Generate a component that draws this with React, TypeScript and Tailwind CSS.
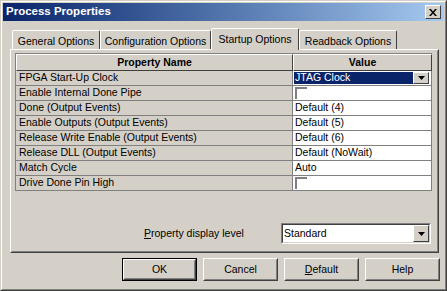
import React from 'react';

const rows: { name: string; value: string; kind: 'select' | 'check' | 'text' }[] = [
  { name: 'FPGA Start-Up Clock', value: 'JTAG Clock', kind: 'select' },
  { name: 'Enable Internal Done Pipe', value: '', kind: 'check' },
  { name: 'Done (Output Events)', value: 'Default (4)', kind: 'text' },
  { name: 'Enable Outputs (Output Events)', value: 'Default (5)', kind: 'text' },
  { name: 'Release Write Enable (Output Events)', value: 'Default (6)', kind: 'text' },
  { name: 'Release DLL (Output Events)', value: 'Default (NoWait)', kind: 'text' },
  { name: 'Match Cycle', value: 'Auto', kind: 'text' },
  { name: 'Drive Done Pin High', value: '', kind: 'check' },
];

const tabs = [
  { label: 'General Options', w: 'w-[88px]' },
  { label: 'Configuration Options', w: 'w-[111px]' },
  { label: 'Startup Options', w: 'w-[88px]', active: true },
  { label: 'Readback Options', w: 'w-[98px]' },
];

// small black down triangle used on combo buttons
const ArrowBtn = () => (
  <div className="w-[16px] h-full shrink-0 bg-[#d4d0c8] border border-t-white border-l-white border-r-[#404040] border-b-[#404040] flex items-center justify-center">
    <svg width="7" height="4" viewBox="0 0 7 4">
      <path d="M0 0h7L3.5 4z" fill="#000" />
    </svg>
  </div>
);

const Check = () => (
  <div className="w-[12px] h-[12px] bg-white border-t-2 border-l-2 border-t-[#808080] border-l-[#808080] ml-[2px]" />
);

const Button = ({ children, isDefault }: { children: React.ReactNode; isDefault?: boolean }) => (
  <div className={`w-[75px] h-[23px] ${isDefault ? 'border border-black' : ''}`}>
    <div className="w-full h-full bg-[#d4d0c8] border border-t-white border-l-white border-r-[#404040] border-b-[#404040]">
      <div className="w-full h-full border border-transparent border-r-[#808080] border-b-[#808080] flex items-center justify-center text-[10.5px] text-black">
        {children}
      </div>
    </div>
  </div>
);

export default function App() {
  return (
    <div
      className="w-[447px] h-[291px] bg-[#d4d0c8] border border-t-[#d4d0c8] border-l-[#d4d0c8] border-r-[#404040] border-b-[#404040] select-none"
      style={{ fontFamily: '"Liberation Sans", Arial, sans-serif' }}
    >
      <div className="w-full h-full border border-t-white border-l-white border-r-[#808080] border-b-[#808080] p-px flex flex-col">
        {/* Title bar */}
        <div className="h-[18px] shrink-0 bg-gradient-to-r from-[#0a246a] to-[#a6caf0] flex items-center justify-between pl-[3px] pr-[3px]">
          <span className="text-white font-bold text-[11.5px] leading-none">Process Properties</span>
          <div className="w-[16px] h-[14px] bg-[#d4d0c8] border border-t-white border-l-white border-r-[#404040] border-b-[#404040] flex items-center justify-center">
            <svg width="8" height="7" viewBox="0 0 8 7">
              <path d="M0 0h2l2 2.5L6 0h2L5 3.5 8 7H6L4 4.5 2 7H0l3-3.5z" fill="#000" />
            </svg>
          </div>
        </div>

        {/* Tabs */}
        <div className="flex items-end h-[28px] pl-[9px] shrink-0">
          {tabs.map((t) =>
            t.active ? (
              <div
                key={t.label}
                className={`${t.w} h-[22px] -mb-px relative z-10 bg-[#d4d0c8] border-l border-t border-r border-l-white border-t-white border-r-[#404040] rounded-t-[2px] flex items-start justify-center pt-[3px] text-[10.5px] text-black whitespace-nowrap`}
              >
                {t.label}
              </div>
            ) : (
              <div
                key={t.label}
                className={`${t.w} h-[19px] bg-[#d4d0c8] border-l border-t border-r border-l-white border-t-white border-r-[#404040] rounded-t-[2px] flex items-start justify-center pt-[3px] text-[10.5px] text-black whitespace-nowrap`}
              >
                {t.label}
              </div>
            )
          )}
        </div>

        {/* Panel */}
        <div className="ml-[7px] w-[429px] h-[204px] shrink-0 border border-t-white border-l-white border-r-[#404040] border-b-[#404040]">
          <div className="w-full h-full border border-transparent border-r-[#808080] border-b-[#808080] pt-[2px] pl-[3px] flex flex-col">
            {/* Property grid */}
            <div className="w-[417px] border-l border-t border-[#808080] text-[10.5px] text-black">
              <div className="flex h-[17px]">
                <div className="w-[277px] bg-[#d4d0c8] border border-t-white border-l-white border-r-[#404040] border-b-[#404040] flex items-center justify-center font-bold">
                  Property Name
                </div>
                <div className="flex-1 bg-[#d4d0c8] border border-t-white border-l-white border-r-[#404040] border-b-[#404040] flex items-center justify-center font-bold">
                  Value
                </div>
              </div>
              {rows.map((r) => (
                <div key={r.name} className="flex h-[15px] border-b border-[#808080]">
                  <div className="w-[277px] border-r border-[#808080] pl-[3px] flex items-center">{r.name}</div>
                  <div className="flex-1 bg-white border-r border-[#808080] flex items-center">
                    {r.kind === 'select' && (
                      <div className="flex w-full h-full items-stretch p-px pr-[2px]">
                        <div className="flex-1 bg-[#0a246a] text-white pl-px flex items-center">{r.value}</div>
                        <ArrowBtn />
                      </div>
                    )}
                    {r.kind === 'check' && <Check />}
                    {r.kind === 'text' && <span className="pl-[2px]">{r.value}</span>}
                  </div>
                </div>
              ))}
            </div>

            <div className="flex-1" />

            {/* Display level */}
            <div className="flex items-center mb-[7px]">
              <span className="text-[10.5px] text-black ml-[129px] w-[137px]">
                <span className="underline">P</span>roperty display level
              </span>
              <div className="w-[150px] h-[21px] bg-white border border-t-[#808080] border-l-[#808080] border-r-white border-b-white">
                <div className="w-full h-full border border-t-[#404040] border-l-[#404040] border-r-[#d4d0c8] border-b-[#d4d0c8] flex items-stretch">
                  <div className="flex-1 text-[10.5px] text-black pl-px flex items-center">Standard</div>
                  <ArrowBtn />
                </div>
              </div>
            </div>
          </div>
        </div>

        {/* Buttons */}
        <div className="flex gap-[6px] mt-[5px] pl-[119px]">
          <Button isDefault>OK</Button>
          <Button>Cancel</Button>
          <Button>
            <span className="underline">D</span>efault
          </Button>
          <Button>Help</Button>
        </div>
      </div>
    </div>
  );
}
